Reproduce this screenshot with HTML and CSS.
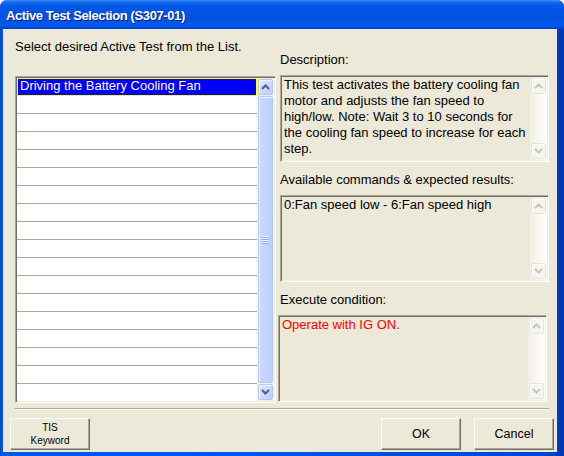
FILE: index.html
```html
<!DOCTYPE html>
<html lang="en">
<head>
    <meta charset="UTF-8">
    <title>Active Test Selection</title>
    <link rel="stylesheet" href="styles.css">
</head>
<body>
    <div class="window">
        <div class="titlebar">Active Test Selection (S307-01)</div>
        <div class="client">
            <div class="main">
                <div class="pick">
                    <p class="prompt">Select desired Active Test from the List.</p>
                    <div class="listbox">
                        <ul class="items">
                            <li class="selected">Driving the Battery Cooling Fan</li>
                            <li></li><li></li><li></li><li></li><li></li><li></li>
                            <li></li><li></li><li></li><li></li><li></li><li></li>
                            <li></li><li></li><li></li><li></li><li></li>
                        </ul>
                        <div class="vscroll">
                            <div class="sbtn"><svg width="9" height="6" viewBox="0 0 9 6"><polyline points="1,5 4.5,1.5 8,5"/></svg></div>
                            <div class="thumb"><span class="grip"></span></div>
                            <div class="sbtn"><svg width="9" height="6" viewBox="0 0 9 6"><polyline points="1,1 4.5,4.5 8,1"/></svg></div>
                        </div>
                    </div>
                </div>
                <div class="info">
                    <div class="field">
                        <div class="label">Description:</div>
                        <div class="textbox">
                            <div class="text">This test activates the battery cooling fan motor and adjusts the fan speed to high/low. Note: Wait 3 to 10 seconds for the cooling fan speed to increase for each step.</div>
                            <div class="vscroll off">
                                <div class="sbtn"><svg width="9" height="6" viewBox="0 0 9 6"><polyline points="1,5 4.5,1.5 8,5"/></svg></div>
                                <div class="track"></div>
                                <div class="sbtn"><svg width="9" height="6" viewBox="0 0 9 6"><polyline points="1,1 4.5,4.5 8,1"/></svg></div>
                            </div>
                        </div>
                    </div>
                    <div class="field">
                        <div class="label">Available commands &amp; expected results:</div>
                        <div class="textbox">
                            <div class="text">0:Fan speed low - 6:Fan speed high</div>
                            <div class="vscroll off">
                                <div class="sbtn"><svg width="9" height="6" viewBox="0 0 9 6"><polyline points="1,5 4.5,1.5 8,5"/></svg></div>
                                <div class="track"></div>
                                <div class="sbtn"><svg width="9" height="6" viewBox="0 0 9 6"><polyline points="1,1 4.5,4.5 8,1"/></svg></div>
                            </div>
                        </div>
                    </div>
                    <div class="field exec">
                        <div class="label">Execute condition:</div>
                        <div class="textbox">
                            <div class="text warn">Operate with IG ON.</div>
                            <div class="vscroll off">
                                <div class="sbtn"><svg width="9" height="6" viewBox="0 0 9 6"><polyline points="1,5 4.5,1.5 8,5"/></svg></div>
                                <div class="track"></div>
                                <div class="sbtn"><svg width="9" height="6" viewBox="0 0 9 6"><polyline points="1,1 4.5,4.5 8,1"/></svg></div>
                            </div>
                        </div>
                    </div>
                </div>
            </div>
            <div class="separator"></div>
            <div class="buttons">
                <button class="btn small">TIS<br>Keyword</button>
                <button class="btn ok">OK</button>
                <button class="btn">Cancel</button>
            </div>
        </div>
    </div>
</body>
</html>
```

FILE: styles.css
```css
body {
    margin: 0;
    background: #fff;
    font-family: "Liberation Sans", Arial, sans-serif;
    font-size: 13px;
    color: #000;
}
.window {
    width: 564px;
    height: 456px;
    display: flex;
    flex-direction: column;
    background: linear-gradient(to right, #0842c8, #0058e8 2px, #0055e5 50%, #0048d6 97%, #0035b0);
    border-radius: 7px 7px 0 0;
    overflow: hidden;
}
.titlebar {
    height: 29px;
    box-sizing: border-box;
    padding: 8px 0 0 6px;
    line-height: 16px;
    color: #fff;
    font-weight: bold;
    letter-spacing: -0.4px;
    text-shadow: 1px 1px #0a1d8a;
    background: linear-gradient(to bottom, #3d8ef8 0px, #1a6cf0 2px, #0a5eeb 4px, #0056e6 8px, #0052e1 16px, #0055e6 22px, #005aec 25px, #004edb 27px, #003fc8 29px);
}
.client {
    flex: 1;
    margin: 0 7px 4px 3px;
    background: #ece9d8;
    display: flex;
    flex-direction: column;
}
.main {
    height: 374px;
    display: flex;
}

/* left: test list */
.pick {
    width: 261px;
    margin-left: 12px;
    padding-top: 10px;
}
.prompt {
    margin: 0;
    line-height: 16px;
}
.listbox {
    margin-top: 21px;
    height: 327px;
    box-sizing: border-box;
    border: 1px solid;
    border-color: #aca899 #fff #fff #aca899;
    padding: 1px;
    box-shadow: inset 1px 1px #716f64, inset -1px -1px #f1efe2;
    background: #fff;
    display: flex;
}
.items {
    flex: 1;
    list-style: none;
    margin: 0;
    padding: 0;
    overflow: hidden;
    background: #fff;
}
.items li {
    height: 18px;
    box-sizing: border-box;
    border-bottom: 1px solid #aca899;
    line-height: 16px;
    padding-left: 3px;
    white-space: nowrap;
}
.items li.selected {
    background: #0000ff;
    color: #fff;
    outline: 1px solid #ffff00;
    outline-offset: -1px;
}

/* scrollbars */
.vscroll {
    width: 17px;
    box-sizing: border-box;
    padding: 1px;
    display: flex;
    flex-direction: column;
    gap: 1px;
    background: #f3f1ec;
}
.sbtn {
    height: 16px;
    box-sizing: border-box;
    border: 1px solid #b4c8f6;
    border-radius: 2px;
    background: linear-gradient(135deg, #dfe8fe, #bccffa);
    box-shadow: inset 1px 1px #f4f7fe;
    display: flex;
    align-items: center;
    justify-content: center;
}
.sbtn polyline {
    fill: none;
    stroke: #4d6185;
    stroke-width: 2;
}
.thumb {
    flex: 1;
    border: 1px solid #b4c8f6;
    border-radius: 2px;
    background: linear-gradient(to right, #cad9fd, #bdcffb);
    box-shadow: inset 1px 1px #eef3fe;
    display: flex;
    align-items: center;
    justify-content: center;
}
.grip {
    width: 7px;
    height: 8px;
    background: repeating-linear-gradient(#eef4fe 0 1px, #8cb0f8 1px 2px);
}
.vscroll.off {
    background: linear-gradient(to right, #f1efe6, #fefefb);
}
.vscroll.off .sbtn {
    border-color: #e6e4db;
    background: #f5f4ef;
    box-shadow: inset 1px 1px #fff;
}
.vscroll.off .sbtn polyline {
    stroke: #c9c7ba;
}
.track {
    flex: 1;
}

/* right: details */
.info {
    width: 269px;
    margin-left: 4px;
    padding-top: 23px;
    display: flex;
    flex-direction: column;
    gap: 10px;
}
.label {
    line-height: 16px;
    margin-bottom: 7px;
}
.textbox {
    height: 87px;
    box-sizing: border-box;
    border: 1px solid;
    border-color: #aca899 #fff #fff #aca899;
    padding: 1px;
    box-shadow: inset 1px 1px #716f64, inset -1px -1px #f1efe2;
    display: flex;
}
.exec .textbox {
    margin-left: -2px;
    margin-right: 2px;
}
.text {
    flex: 1;
    padding: 0 0 0 2px;
    line-height: 16px;
    overflow: hidden;
}
.text.warn {
    color: #ff0000;
}

/* bottom */
.separator {
    margin: 5px 8px 0 12px;
    border-top: 1px solid #aca899;
    border-bottom: 1px solid #fff;
}
.buttons {
    margin-top: 8px;
    padding: 0 3px 0 7px;
    display: flex;
    gap: 13px;
}
.btn {
    width: 80px;
    height: 32px;
    padding: 0;
    font-family: "Liberation Sans", Arial, sans-serif;
    font-size: 12.5px;
    color: #000;
    background: #ece9d8;
    border: 1px solid;
    border-color: #fff #716f64 #716f64 #fff;
    box-shadow: inset -1px -1px #aca899;
}
.btn.small {
    font-size: 10px;
    line-height: 13px;
}
.btn.ok {
    margin-left: auto;
}
```
